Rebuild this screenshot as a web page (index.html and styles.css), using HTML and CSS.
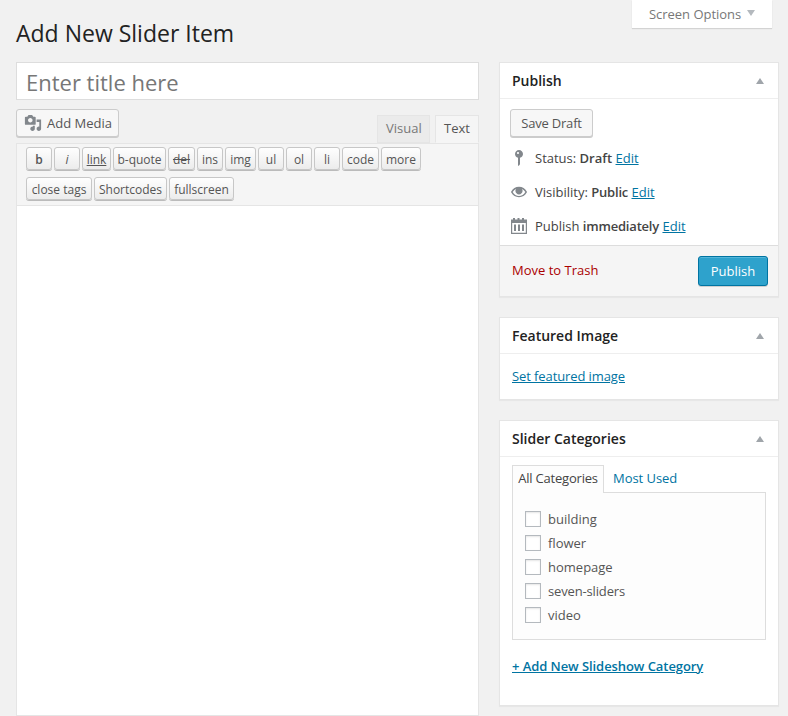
FILE: index.html
```html
<!DOCTYPE html>
<html lang="en">
<head>
<meta charset="utf-8">
<title>Add New Slider Item</title>
<link rel="stylesheet" href="styles.css">
</head>
<body>
<div class="page">
  <header class="head">
    <h1 class="title">Add New Slider Item</h1>
    <button class="screen-options">Screen Options<span class="arrow-down"></span></button>
  </header>
  <div class="columns">
    <main class="main">
      <div class="title-input">Enter title here</div>
      <div class="editor-tools">
        <button class="btn media-btn">
          <svg class="media-icon" width="18" height="18" viewBox="0 0 20 20"><path fill="#82878c" fill-rule="evenodd" d="M13 11V4c0-.55-.45-1-1-1h-1.670L9 1H5L3.670 3H2c-.55 0-1 .45-1 1v7c0 .55.45 1 1 1h10c.55 0 1-.45 1-1zM7 4.500c1.380 0 2.500 1.120 2.500 2.500S8.380 9.500 7 9.500 4.500 8.380 4.500 7 5.620 4.500 7 4.500zM14 6h5v10.500c0 1.380-1.120 2.500-2.500 2.500S14 17.880 14 16.500s1.120-2.500 2.500-2.500c.17 0 .34.020.5.050V9h-3V6zm-4 8.050V13h2v3.500c0 1.380-1.120 2.500-2.500 2.500S7 17.880 7 16.500 8.120 14 9.500 14c.17 0 .34.020.5.050z"/></svg>
          Add Media
        </button>
        <div class="tabs">
          <span class="tab">Visual</span>
          <span class="tab tab-active">Text</span>
        </div>
      </div>
      <div class="toolbar">
        <div class="qt-row">
          <button class="qt w26 qt-b">b</button>
          <button class="qt w26 qt-i">i</button>
          <button class="qt w29 qt-link">link</button>
          <button class="qt w53">b-quote</button>
          <button class="qt w27 qt-del">del</button>
          <button class="qt w26">ins</button>
          <button class="qt w31">img</button>
          <button class="qt w26">ul</button>
          <button class="qt w26">ol</button>
          <button class="qt w26">li</button>
          <button class="qt w37">code</button>
          <button class="qt w40">more</button>
        </div>
        <div class="qt-row">
          <button class="qt w66">close tags</button>
          <button class="qt w73">Shortcodes</button>
          <button class="qt w65">fullscreen</button>
        </div>
      </div>
      <div class="editor-area"></div>
    </main>
    <aside class="side">
      <section class="box">
        <div class="box-head"><h2 class="box-title">Publish</h2><span class="arrow-up"></span></div>
        <div class="publish-body">
          <button class="btn save-btn">Save Draft</button>
          <div class="pub-row">
            <svg class="pub-icon" width="20" height="20" viewBox="0 0 20 20"><path fill="#82878c" fill-rule="evenodd" d="M14 6c0 1.860-1.280 3.410-3 3.860V16c0 1-2 2-2 2V9.860c-1.720-.45-3-2-3-3.860 0-2.210 1.790-4 4-4s4 1.790 4 4zM8 5c0 .55.45 1 1 1s1-.45 1-1-.45-1-1-1-1 .45-1 1z"/></svg>
            <span>Status: <b class="strong strong-draft">Draft</b> <a class="link" href="#">Edit</a></span>
          </div>
          <div class="pub-row">
            <svg class="pub-icon" width="20" height="20" viewBox="-2.500 -2.500 25 25"><path fill="#82878c" d="M19.700 9.400C17.700 6 14.320 3.500 10 3.500S2.300 6 .3 9.400L0 10l.3.6c2 3.400 5.380 5.900 9.700 5.900s7.700-2.500 9.700-5.900l.3-.6-.3-.6zM10 15c-3.300 0-6.100-1.900-7.900-5 1.100-1.900 2.500-3.300 4.300-4.200-.5.700-.9 1.600-.9 2.600C5.500 10.900 7.500 13 10 13s4.500-2.100 4.500-4.600c0-1-.3-1.900-.9-2.600 1.800.9 3.200 2.300 4.300 4.200-1.800 3.100-4.600 5-7.900 5z"/></svg>
            <span>Visibility: <b class="strong">Public</b> <a class="link" href="#">Edit</a></span>
          </div>
          <div class="pub-row">
            <svg class="pub-icon" width="20" height="20" viewBox="0 0 20 20"><path fill="#82878c" fill-rule="evenodd" d="M2 3.500h2V2h2v1.500h2.500V2h2v1.500H13V2h2v1.500h3V18H2zM3.200 7v9.800h13.600V7zM5 8.500h2V15H5zm4 0h2V15H9zm4 0h2V15h-2z"/></svg>
            <span>Publish <b class="strong">immediately</b> <a class="link" href="#">Edit</a></span>
          </div>
        </div>
        <div class="pub-foot">
          <a class="trash" href="#">Move to Trash</a>
          <button class="publish-btn">Publish</button>
        </div>
      </section>
      <section class="box">
        <div class="box-head"><h2 class="box-title">Featured Image</h2><span class="arrow-up"></span></div>
        <div class="featured-body"><a class="link" href="#">Set featured image</a></div>
      </section>
      <section class="box">
        <div class="box-head"><h2 class="box-title">Slider Categories</h2><span class="arrow-up"></span></div>
        <div class="cat-body">
          <div class="cat-tabs">
            <span class="cat-tab cat-tab-active">All Categories</span>
            <a class="cat-tab cat-tab-link" href="#">Most Used</a>
          </div>
          <ul class="cat-list">
            <li class="cat-item"><span class="check"></span>building</li>
            <li class="cat-item"><span class="check"></span>flower</li>
            <li class="cat-item"><span class="check"></span>homepage</li>
            <li class="cat-item"><span class="check"></span><span class="cat-tight">seven-sliders</span></li>
            <li class="cat-item"><span class="check"></span>video</li>
          </ul>
          <a class="link add-cat" href="#">+ Add New Slideshow Category</a>
        </div>
      </section>
    </aside>
  </div>
</div>
</body>
</html>
```

FILE: styles.css
```css
* { box-sizing: border-box; }
html, body { margin: 0; height: 716px; overflow: hidden; }
body { background: #f1f1f1; color: #444; font: 13px/1.4 "Open Sans", sans-serif; }
button { font-family: inherit; cursor: pointer; }
.page { padding: 0 9px 0 16px; }

.head { display: flex; justify-content: space-between; align-items: flex-start; height: 62px; }
.title { margin: 0; padding-top: 19px; font-size: 23px; font-weight: 400; line-height: 29px; color: #222; }
.screen-options { display: flex; align-items: center; height: 28px; width: 140px; margin-right: 7px; padding: 0 0 1px 17px; background: #fff; border: 0; box-shadow: 0 1px 1px rgba(0,0,0,.12); color: #777; font-size: 13px; letter-spacing: -.03px; }
.arrow-down { margin-left: 6px; border: 4px solid transparent; border-top: 6px solid #b4b9be; border-bottom: 0; width: 0; height: 0; margin-top: -1px; }

.columns { display: flex; gap: 20px; align-items: flex-start; }
.main { width: 463px; flex: none; }
.side { width: 280px; flex: none; display: flex; flex-direction: column; gap: 20px; }

.title-input { height: 38px; padding: 0 9px; background: #fff; border: 1px solid #ddd; font-size: 22px; line-height: 38px; color: #777; }

.editor-tools { display: flex; justify-content: space-between; align-items: flex-end; height: 43px; }
.btn { display: inline-flex; align-items: center; height: 28px; background: #f7f7f7; border: 1px solid #ccc; border-radius: 3px; box-shadow: 0 1px 0 #ccc; color: #555; font-size: 13px; padding: 0 10px; }
.media-btn { width: 103px; align-self: flex-start; margin-top: 9px; padding: 0 0 0 7px; gap: 5px; }
.media-icon { flex: none; }
.tabs { display: flex; gap: 5px; }
.tab { height: 28px; padding: 0 10px 0 8px; width: 53px; line-height: 25px; background: #ebebeb; border: 1px solid #e5e5e5; color: #777; text-align: center; }
.tab-active { width: 44px; padding: 0; background: #f5f5f5; border-bottom-color: #f5f5f5; color: #555; }

.toolbar { height: 63px; padding: 3px 9px 0; background: #f5f5f5; border: 1px solid #e5e5e5; display: flex; flex-direction: column; gap: 7px; }
.qt-row { display: flex; gap: 2px; }
.qt { height: 23px; padding: 2px 0 0; background: linear-gradient(#fefefe, #ececec); border: 1px solid #c7c7c7; border-radius: 3px; box-shadow: 0 1px 0 #bbb; color: #555; font-size: 12px; line-height: 19px; white-space: nowrap; }
.w26 { width: 26px; }
.w27 { width: 27px; }
.w29 { width: 29px; }
.w31 { width: 31px; }
.w37 { width: 37px; }
.w40 { width: 40px; }
.w53 { width: 53px; }
.w65 { width: 65px; }
.w66 { width: 66px; }
.w73 { width: 73px; }
.qt-b { font-weight: 600; }
.qt-i { font-style: italic; }
.qt-link { text-decoration: underline; }
.qt-del { text-decoration: line-through; }
.editor-area { height: 510px; background: #fff; border: 1px solid #e5e5e5; border-top: 0; }

.box { background: #fff; border: 1px solid #e5e5e5; box-shadow: 0 1px 1px rgba(0,0,0,.04); }
.box-head { display: flex; justify-content: space-between; align-items: center; height: 36px; padding: 0 14px 0 12px; border-bottom: 1px solid #eee; }
.box-title { margin: 0; font-size: 14px; font-weight: 600; line-height: 19px; color: #222; }
.arrow-up { width: 0; height: 0; border: 4px solid transparent; border-bottom: 6px solid #a0a5aa; border-top: 0; }

.publish-body { padding: 10px 10px 0; height: 146px; }
.save-btn { width: 83px; justify-content: center; padding: 0; letter-spacing: -.2px; }
.pub-row { display: flex; align-items: center; gap: 6px; height: 20px; margin: 14px 0 0 -1px; }
.save-btn + .pub-row { margin-top: 11px; }
.pub-icon { flex: none; }
.strong { font-weight: 600; letter-spacing: -.2px; }
.strong-draft { letter-spacing: 0; }
.link { color: #0074a2; text-decoration: underline; }
.pub-foot { display: flex; justify-content: space-between; align-items: center; height: 51px; padding: 0 10px 0 12px; background: #f5f5f5; border-top: 1px solid #ddd; }
.trash { padding-bottom: 2px; color: #a00; text-decoration: none; }
.publish-btn { width: 70px; height: 30px; background: #2ea2cc; border: 1px solid #0074a2; border-radius: 3px; box-shadow: inset 0 1px 0 rgba(120,200,230,.5), 0 1px 0 rgba(0,0,0,.15); color: #fff; font-size: 13px; padding: 0; }

.featured-body { height: 45px; padding: 13px 12px 0; letter-spacing: -.1px; }

.cat-body { padding: 8px 12px 0; height: 248px; }
.cat-tabs { display: flex; height: 28px; position: relative; }
.cat-tab { height: 28px; line-height: 25px; }
.cat-tab-active { width: 92px; text-align: center; border: 1px solid #ddd; border-bottom: 0; background: #fdfdfd; position: relative; z-index: 1; letter-spacing: -.2px; }
.cat-tab-link { margin-left: 9px; line-height: 27px; color: #0074a2; text-decoration: none; letter-spacing: -.05px; }
.cat-list { height: 148px; margin: -1px 0 0; padding: 14px 12px 0; list-style: none; background: #fdfdfd; border: 1px solid #ddd; }
.cat-item { display: flex; align-items: center; gap: 7px; height: 24px; color: #555; }
.cat-tight { letter-spacing: -.15px; }
.check { flex: none; width: 16px; height: 16px; background: #fff; border: 1px solid #b4b9be; box-shadow: inset 0 1px 2px rgba(0,0,0,.1); }
.add-cat { display: block; margin-top: 17px; font-weight: 600; letter-spacing: -.07px; }
```
